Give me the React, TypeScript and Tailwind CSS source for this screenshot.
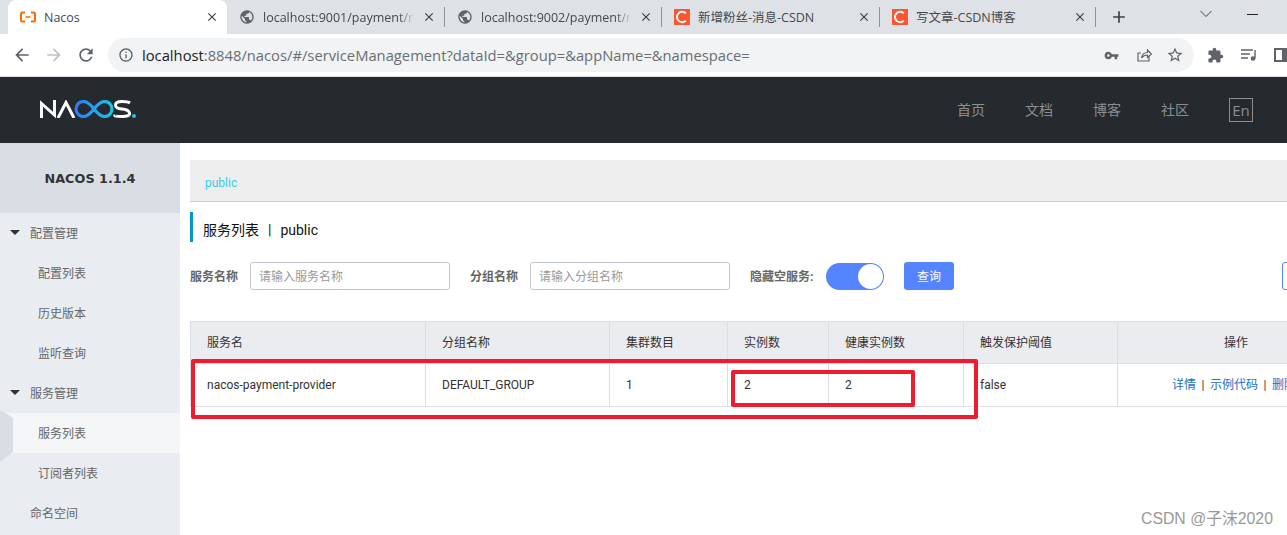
import React from "react";
import { MdArrowBack, MdArrowForward, MdRefresh, MdInfoOutline, MdVpnKey, MdStarBorder, MdExtension, MdPublic, MdClose, MdAdd } from "react-icons/md";

const cjk = '"Open Sans","Noto Sans CJK SC",sans-serif';

function Favicon() {
  return (
    <svg width="16" height="16" viewBox="0 0 16 16" className="shrink-0">
      <path d="M5 3.500H2.500Q1 3.500 1 5v6q0 1.500 1.500 1.500H5M11 3.500h2.500Q15 3.500 15 5v6q0 1.500-1.500 1.500H11" fill="none" stroke="#ff6a00" strokeWidth="2" />
      <path d="M5.500 8h5" stroke="#ff6a00" strokeWidth="1.500" />
    </svg>
  );
}

function Csdn() {
  return (
    <svg width="16" height="16" viewBox="0 0 16 16" className="shrink-0">
      <rect width="16" height="16" fill="#fc5531" />
      <path d="M11.800 4.300A5.200 5.200 0 1 0 11.800 11.700" fill="none" stroke="#fff" strokeWidth="2" />
    </svg>
  );
}

function Tab({ w, icon, title, active, fade, sep }: { w: string; icon: React.ReactNode; title: string; active?: boolean; fade?: boolean; sep?: boolean }) {
  return (
    <div className={`${w} h-[34px] shrink-0 flex items-center relative ${active ? "bg-white rounded-t-lg" : ""}`}>
      <div className="pl-3">{icon}</div>
      <span className={`text-[12.500px] ml-2 pt-[2px] text-[#45494d] whitespace-nowrap flex-1 min-w-0 ${fade ? "[mask-image:linear-gradient(to_right,#000_90%,transparent)]" : ""}`}>{title}</span>
      <MdClose size={14} className="text-[#3c4043] shrink-0 mr-2 ml-2" />
      {sep && <div className="w-px h-5 bg-[#8f9296] shrink-0" />}
    </div>
  );
}

function SideItem({ label, sub, arrow, selected }: { label: string; sub?: boolean; arrow?: boolean; selected?: boolean }) {
  return (
    <div className={`h-10 flex items-center relative text-[12px] pt-[2px] text-[#666] ${sub ? "pl-[38px]" : "pl-[30px]"} ${selected ? "bg-[#f4f6f8]" : ""}`}>
      {arrow && <span className="absolute left-[10px] top-[17px] w-0 h-0 border-x-[5px] border-x-transparent border-t-[5px] border-t-[#333]" />}
      {selected && <span className="absolute left-0 top-[-3px] w-[13px] h-[52px] bg-[#d9dee5] [clip-path:polygon(0_0,100%_15%,100%_81%,0_100%)]" />}
      {label}
    </div>
  );
}

const cols = "grid-cols-[236px_184px_118px_101px_135px_154px_236px]";
const heads = ["服务名", "分组名称", "集群数目", "实例数", "健康实例数", "触发保护阈值"];
const cells = ["nacos-payment-provider", "DEFAULT_GROUP", "1", "2", "2", "false"];

export default function App() {
  return (
    <div className="w-[1287px] h-[535px] overflow-hidden relative bg-white flex flex-col" style={{ fontFamily: cjk }}>
      {/* tab strip */}
      <div className="h-[34px] bg-[#dee1e6] flex items-center pl-2 shrink-0">
        <Tab w="w-[219px]" active icon={<Favicon />} title="Nacos" />
        <Tab w="w-[218px]" sep icon={<MdPublic size={16} className="text-[#5f6368]" />} title="localhost:9001/payment/n" fade />
        <Tab w="w-[217px]" sep icon={<MdPublic size={16} className="text-[#5f6368]" />} title="localhost:9002/payment/n" fade />
        <Tab w="w-[218px]" sep icon={<Csdn />} title="新增粉丝-消息-CSDN" />
        <Tab w="w-[216px]" sep icon={<Csdn />} title="写文章-CSDN博客" />
        <MdAdd size={20} className="ml-[13px] text-[#3c4043] shrink-0" />
        <svg width="14" height="8" viewBox="0 0 14 8" className="ml-[70px] -mt-[7px] shrink-0" fill="none" stroke="#3c4043" strokeWidth="1">
          <path d="M1.500 1l5.500 5.500L12.500 1" />
        </svg>
        <div className="ml-[34px] -mt-[6px] w-[11px] h-px bg-[#222] shrink-0" />
      </div>
      {/* toolbar */}
      <div className="h-[43px] bg-white flex items-center shrink-0 border-b border-[#dadce0]">
        <MdArrowBack size={20} className="ml-[12px] text-[#5f6368] shrink-0" />
        <MdArrowForward size={20} className="ml-[12px] text-[#bdc1c6] shrink-0" />
        <MdRefresh size={20} className="ml-[12px] text-[#5f6368] shrink-0" />
        <div className="ml-[12px] w-[1086px] h-[34px] rounded-full bg-[#f1f3f4] flex items-center shrink-0">
          <MdInfoOutline size={16} className="ml-[10px] text-[#5f6368] shrink-0" />
          <div className="ml-[8px] text-[14.750px] text-[#6a6e73] whitespace-nowrap flex-1">
            <span className="text-[#202124]">localhost</span>:8848/nacos/#/serviceManagement?dataId=&group=&appName=&namespace=
          </div>
          <MdVpnKey size={15} className="text-[#5f6368] shrink-0" />
          <svg width="16" height="16" viewBox="0 0 16 16" className="ml-[17px] shrink-0" fill="none" stroke="#5f6368" strokeWidth="1.200">
            <path d="M13 9v5H2V6h3" />
            <path d="M5.500 11c.5-3.500 3-5.500 6-5.500V3l4 4-4 3.500V8c-2.500 0-4.500 1-6 3z" />
          </svg>
          <MdStarBorder size={18} className="ml-[14px] mr-[10px] text-[#5f6368] shrink-0" />
        </div>
        <MdExtension size={17} className="ml-[13px] text-[#5f6368] shrink-0" />
        <svg width="16" height="14" viewBox="0 0 16 14" className="ml-[17px] shrink-0" fill="none" stroke="#5f6368" strokeWidth="1.400">
          <path d="M0 2h12M0 6h9M0 10h7" />
          <path d="M14 2v8.500" />
          <circle cx="12" cy="10.500" r="1.600" fill="#5f6368" />
        </svg>
        <div className="ml-[17px] w-[14px] h-[14px] border-[2px] border-[#5f6368] border-r-[6px] shrink-0" />
      </div>
      {/* nacos header */}
      <div className="h-[66px] bg-[#252a2f] flex items-center shrink-0">
        <svg width="96" height="18" viewBox="0 0 96 18" className="ml-[40px] shrink-0 -mt-[2px]" fill="none">
          <defs>
            <linearGradient id="nac" x1="0" x2="1" y1="0" y2="0">
              <stop offset="0" stopColor="#2f7cf6" />
              <stop offset="1" stopColor="#1cc5e8" />
            </linearGradient>
          </defs>
          <path d="M1.500 18V3.500L14.500 15V0" stroke="#fff" strokeWidth="3" />
          <path d="M18 18L26 2.500L34 18" stroke="#fff" strokeWidth="3" />
          <path d="M54 9C50 4 47 1.500 43.500 1.500A7.500 7.500 0 0 0 43.500 16.500C47 16.500 50 14 54 9C58 4 61 1.500 64.500 1.500A7.500 7.500 0 0 1 64.500 16.500C61 16.500 58 14 54 9Z" stroke="url(#nac)" strokeWidth="3.200" />
          <path d="M90 3Q88 1.500 82 1.500 75.500 1.500 75.500 5T82 9T89.500 13 82 16.500 75 15" stroke="#fff" strokeWidth="3" />
          <circle cx="94" cy="16" r="2" fill="#1cc5e8" />
        </svg>
        <div className="ml-auto flex items-center text-[14px] text-[#8c8f92] mr-[34px]">
          <span className="-mt-[2px]">首页</span>
          <span className="ml-10 -mt-[2px]">文档</span>
          <span className="ml-10 -mt-[2px]">博客</span>
          <span className="ml-10 -mt-[2px]">社区</span>
          <span className="ml-10 w-6 h-6 border border-[#8c8f92] flex items-center justify-center text-[15px]">En</span>
        </div>
      </div>
      {/* body */}
      <div className="flex flex-1 min-h-0">
        <aside className="w-[180px] shrink-0 bg-[#e9edf2]">
          <div className="h-[70px] pt-px bg-[#d9dee5] flex items-center justify-center text-[12.800px] font-bold text-[#333]" style={{ fontFamily: '"DejaVu Sans",sans-serif' }}>NACOS 1.1.4</div>
          <SideItem label="配置管理" arrow />
          <SideItem label="配置列表" sub />
          <SideItem label="历史版本" sub />
          <SideItem label="监听查询" sub />
          <SideItem label="服务管理" arrow />
          <SideItem label="服务列表" sub selected />
          <SideItem label="订阅者列表" sub />
          <SideItem label="命名空间" />
        </aside>
        <main className="flex-1 min-w-0 overflow-hidden pl-[10px] pt-[17px]" style={{ fontFamily: '"Roboto","Noto Sans CJK SC",sans-serif' }}>
          <div className="h-[42px] bg-[#eeeeee] border-b border-[#cccccc] flex items-center pl-[15px] pt-1 text-[12px] text-[#33cde5]">public</div>
          <div className="mt-[10px] h-[30px] border-l-[3px] border-[#0099cc] pl-[10px] pt-[7px] flex items-center text-[14px] text-[#111]">
            服务列表<span className="ml-[9px] mr-[9px]">|</span>public
          </div>
          <div className="mt-5 flex items-center h-7 w-[1200px] text-[12px]">
            <span className="font-bold text-[#666] w-[60px] shrink-0 pt-[2px]">服务名称</span>
            <div className="w-[200px] h-7 pt-[2px] border border-[#c4c6cf] rounded-[3px] flex items-center pl-2 text-[#999] shrink-0">请输入服务名称</div>
            <span className="font-bold text-[#666] w-[60px] ml-5 shrink-0 pt-[2px]">分组名称</span>
            <div className="w-[200px] h-7 pt-[2px] border border-[#c4c6cf] rounded-[3px] flex items-center pl-2 text-[#999] shrink-0">请输入分组名称</div>
            <span className="font-bold text-[#666] ml-5 w-[76px] shrink-0 pt-[2px]">隐藏空服务:</span>
            <div className="w-[58px] h-[27px] rounded-full bg-[#5584ff] flex items-center justify-end pr-px shrink-0">
              <div className="w-[25px] h-[25px] rounded-full bg-white" />
            </div>
            <div className="ml-5 w-[50px] h-7 pt-[2px] rounded-[3px] bg-[#5584ff] text-white flex items-center justify-center shrink-0">查询</div>
            <div className="ml-[328px] w-[60px] h-7 rounded-[3px] border border-[#5584ff] shrink-0" />
          </div>
          <div className="mt-[31px] w-[1164px] text-[12px]">
            <div className={`grid ${cols} h-[43px] bg-[#ebecf0] border-y border-[#dcdee3] text-[#333]`}>
              {heads.map((h, i) => (
                <div key={h} className={`flex items-center pl-4 pt-px border-r border-[#dcdee3] ${i === 0 ? "border-l" : ""}`}>{h}</div>
              ))}
              <div className="flex items-center justify-center pt-px">操作</div>
            </div>
            <div className={`grid ${cols} h-[43px] border-b border-[#dcdee3] text-[#333]`}>
              {cells.map((c, i) => (
                <div key={i} className={`flex items-center pl-4 border-r border-[#dcdee3] ${i === 0 ? "border-l" : ""}`}>{c}</div>
              ))}
              <div className="flex items-center pl-[54px] text-[#1a6fc4] whitespace-nowrap">
                详情<span className="mx-[5.500px] text-[#333]">|</span>示例代码<span className="mx-[5.500px] text-[#333]">|</span>删除
              </div>
            </div>
          </div>
        </main>
      </div>
      {/* annotations drawn over the screenshot */}
      <div className="absolute left-[191px] top-[359px] w-[787px] h-[60px] border-[4px] border-[#ee1c2e] rounded-[2px]" />
      <div className="absolute left-[731px] top-[370px] w-[184px] h-[37px] border-[4px] border-[#ee1c2e] rounded-[2px]" />
      <div className="absolute left-[1141px] top-[507px] text-[15.800px] text-[#999] whitespace-nowrap" style={{ fontFamily: '"Liberation Sans","Noto Sans CJK SC",sans-serif' }}>CSDN @子沫2020</div>
    </div>
  );
}
